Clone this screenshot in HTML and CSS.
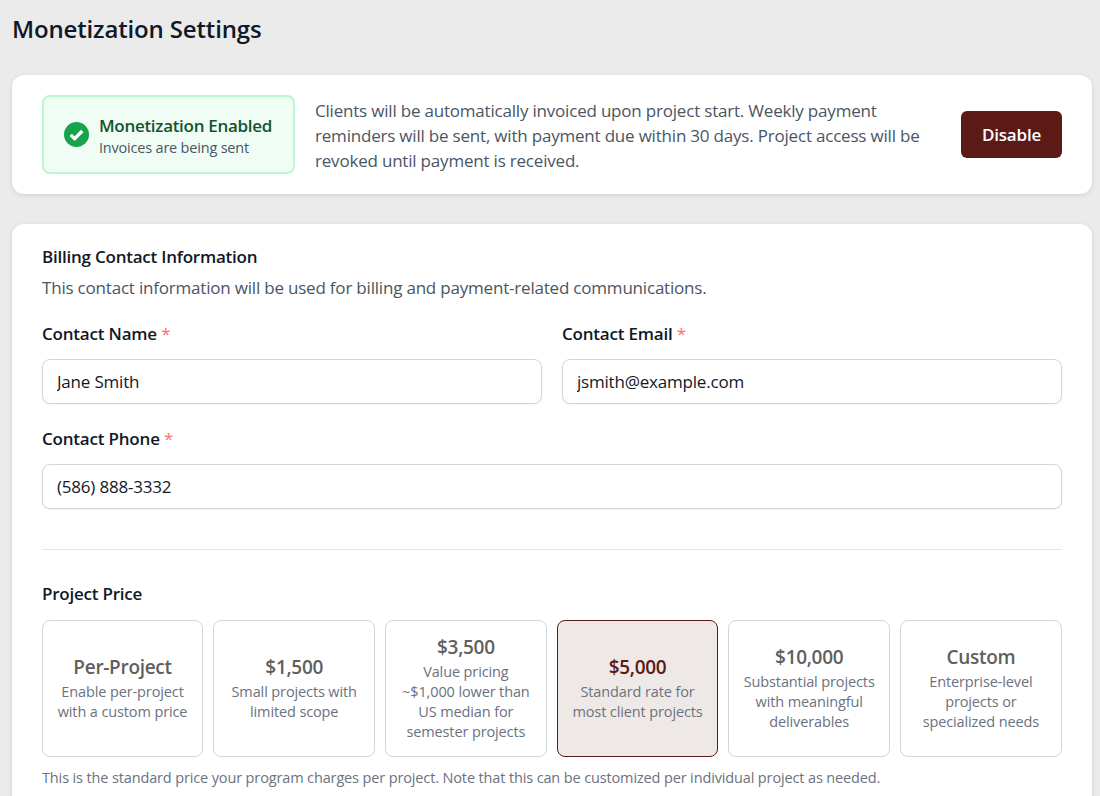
FILE: index.html
```html
<!DOCTYPE html>
<html lang="en">

<head>
    <meta charset="UTF-8">
    <meta name="viewport" content="width=device-width, initial-scale=1.0">
    <title>Monetization Settings</title>
    <link rel="stylesheet" href="styles.css">
</head>

<body>
    <h1 class="page-title">Monetization Settings</h1>

    <section class="card status-card">
        <div class="status-box">
            <svg class="status-icon" viewBox="0 0 24 24" aria-hidden="true">
                <circle cx="12" cy="12" r="12" fill="#16a34a"></circle>
                <path d="M6.4 12.4l3.8 3.7 7.4-7.5" fill="none" stroke="#fff" stroke-width="3.2"></path>
            </svg>
            <div class="status-copy">
                <div class="status-title">Monetization Enabled</div>
                <div class="status-sub">Invoices are being sent</div>
            </div>
        </div>
        <p class="status-text">Clients will be automatically invoiced upon project start. Weekly payment reminders will be sent, with payment due within 30 days. Project access will be revoked until payment is received.</p>
        <button class="disable-btn">Disable</button>
    </section>

    <section class="card form-card">
        <h2 class="section-title">Billing Contact Information</h2>
        <p class="section-desc">This contact information will be used for billing and payment-related communications.</p>

        <div class="field-row">
            <div class="field">
                <label class="field-label">Contact Name <span class="req">*</span></label>
                <input class="field-input" type="text" value="Jane Smith">
            </div>
            <div class="field">
                <label class="field-label">Contact Email <span class="req">*</span></label>
                <input class="field-input" type="text" value="jsmith@example.com">
            </div>
        </div>
        <div class="field">
            <label class="field-label">Contact Phone <span class="req">*</span></label>
            <input class="field-input" type="text" value="(586) 888-3332">
        </div>

        <hr class="divider">

        <h2 class="section-title price-title">Project Price</h2>
        <div class="price-grid">
            <div class="price-opt">
                <div class="price-name">Per-Project</div>
                <div class="price-desc">Enable per-project with a custom price</div>
            </div>
            <div class="price-opt">
                <div class="price-name">$1,500</div>
                <div class="price-desc">Small projects with limited scope</div>
            </div>
            <div class="price-opt">
                <div class="price-name">$3,500</div>
                <div class="price-desc">Value pricing ~$1,000 lower than US median for semester projects</div>
            </div>
            <div class="price-opt selected">
                <div class="price-name">$5,000</div>
                <div class="price-desc">Standard rate for most client projects</div>
            </div>
            <div class="price-opt">
                <div class="price-name">$10,000</div>
                <div class="price-desc">Substantial projects with meaningful deliverables</div>
            </div>
            <div class="price-opt">
                <div class="price-name">Custom</div>
                <div class="price-desc">Enterprise-level projects or specialized needs</div>
            </div>
        </div>
        <p class="price-note">This is the standard price your program charges per project. Note that this can be customized per individual project as needed.</p>
    </section>
</body>

</html>
```

FILE: styles.css
```css
* {
    box-sizing: border-box;
}

html,
body {
    height: 100vh;
    overflow: hidden;
}

body {
    margin: 0;
    padding: 0 8px 0 12px;
    background: #ebebeb;
    color: #111827;
    font-family: "Open Sans", "Noto Sans", sans-serif;
    letter-spacing: -0.2px;
}

.page-title {
    margin: 0;
    padding-top: 12px;
    height: 75px;
    font-size: 24px;
    line-height: 34px;
    font-weight: 600;
    letter-spacing: -0.15px;
    color: #111827;
}

.card {
    background: #fff;
    border-radius: 12px;
    box-shadow: 0 1px 4px rgba(0, 0, 0, 0.12);
    padding: 20px 30px;
}

.status-card {
    display: flex;
    align-items: center;
    gap: 20px;
    height: 119px;
    margin-bottom: 30px;
}

.status-box {
    display: flex;
    align-items: center;
    gap: 10px;
    width: 253px;
    height: 79px;
    flex-shrink: 0;
    padding-left: 20px;
    background: #f0fdf4;
    border: 2px solid #bbf7d0;
    border-radius: 8px;
}

.status-icon {
    width: 25px;
    height: 25px;
    flex-shrink: 0;
}

.status-copy {
    padding-top: 3px;
}

.status-title {
    font-size: 17px;
    line-height: 24px;
    font-weight: 600;
    letter-spacing: -0.3px;
    color: #14532d;
}

.status-sub {
    font-size: 14.5px;
    line-height: 20px;
    letter-spacing: -0.2px;
    color: #4b5563;
}

.status-text {
    flex: 1;
    margin: 2px 0 0;
    font-size: 17px;
    line-height: 25px;
    color: #4b5563;
}

.disable-btn {
    width: 101px;
    height: 47px;
    flex-shrink: 0;
    border: none;
    border-radius: 6px;
    background: #5c1a16;
    color: #fff;
    font-family: inherit;
    font-size: 17px;
    font-weight: 600;
    letter-spacing: inherit;
}

.form-card {
    height: 700px;
    padding-top: 21px;
}

.section-title {
    margin: 0;
    font-size: 17px;
    line-height: 24px;
    font-weight: 600;
    letter-spacing: -0.23px;
    color: #111827;
}

.section-desc {
    margin: 7px 0 0;
    font-size: 17px;
    line-height: 24px;
    color: #4b5563;
}

.field-row {
    display: grid;
    grid-template-columns: 1fr 1fr;
    gap: 20px;
    margin-top: 22px;
    margin-bottom: 23px;
}

.field-label {
    display: block;
    margin-bottom: 13px;
    font-size: 17px;
    line-height: 24px;
    font-weight: 600;
    color: #111827;
}

.req {
    color: #f87171;
    font-weight: 400;
}

.field-input {
    display: block;
    width: 100%;
    height: 45px;
    padding: 0 14px;
    border: 1px solid #d1d5db;
    border-radius: 8px;
    box-shadow: 0 1px 2px rgba(0, 0, 0, 0.06);
    background: #fff;
    color: #111827;
    font-family: inherit;
    font-size: 17px;
    letter-spacing: inherit;
}

.divider {
    height: 1px;
    margin: 40px 0 32px;
    border: none;
    background: #e5e7eb;
}

.price-title {
    margin-bottom: 14px;
}

.price-grid {
    display: grid;
    grid-template-columns: repeat(6, 1fr);
    gap: 10px;
    margin: 0 0.3px 0 -0.3px;
}

.price-opt {
    display: flex;
    flex-direction: column;
    justify-content: center;
    height: 137px;
    padding: 0 14px;
    border: 1px solid #d1d5db;
    border-radius: 8px;
    text-align: center;
}

.price-opt.selected {
    background: #eee9e7;
    border-color: #5c1a16;
}

.price-name {
    margin-bottom: 4px;
    font-size: 19px;
    line-height: 22px;
    font-weight: 600;
    letter-spacing: -0.3px;
    color: #5f5f5f;
}

.selected .price-name {
    color: #5c1a16;
}

.price-desc {
    font-size: 14.5px;
    line-height: 20px;
    letter-spacing: -0.12px;
    color: #6b7280;
}

.price-note {
    margin: 11px 0 0;
    font-size: 14.5px;
    line-height: 20px;
    letter-spacing: -0.135px;
    color: #6b7280;
}
```
